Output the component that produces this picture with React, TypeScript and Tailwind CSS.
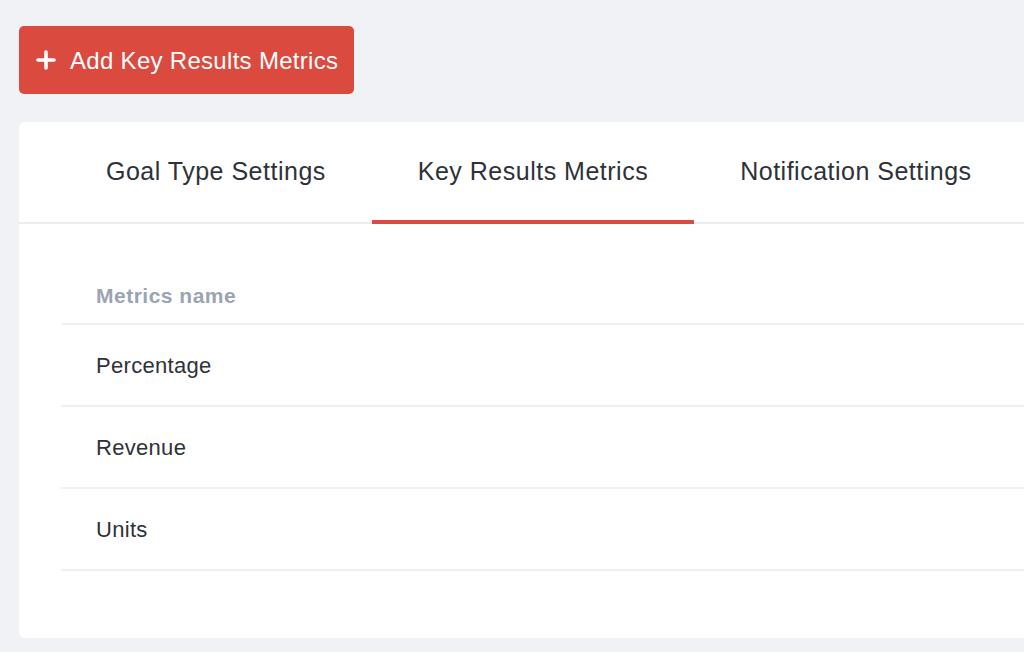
import React from "react";

export default function App() {
  const rows = ["Percentage", "Revenue", "Units"];
  return (
    <div
      className="w-[1024px] h-[652px] overflow-hidden bg-[#f0f2f6]"
      style={{ fontFamily: '"Liberation Sans", Arial, sans-serif' }}
    >
      <div className="pt-[26px] pl-[19px]">
        <button className="flex items-center h-[68px] w-[335px] rounded-[5px] bg-[#da4a3f] text-white pl-[17px]">
          <svg width="20" height="20" viewBox="0 0 20 20" className="mr-[14px]">
            <path d="M10 2v16M2 10h16" stroke="white" strokeWidth="3.6" strokeLinecap="round" />
          </svg>
          <span className="text-[24px] leading-none tracking-[0.3px] pt-[1px]">Add Key Results Metrics</span>
        </button>
      </div>
      <div className="mt-[28px] ml-[19px] w-[1030px] h-[516px] bg-white rounded-[6px]">
        <div className="flex pl-[41px] border-b-2 border-[#e9ecf0] h-[102px]">
          {["Goal Type Settings", "Key Results Metrics", "Notification Settings"].map((t, i) => (
            <div
              key={t}
              className={
                "flex items-center px-[46px] text-[25px] tracking-[0.5px] text-[#2e3238] border-b-4 -mb-[2px] pt-[1px] " +
                (i === 1 ? "border-[#da4a3f]" : "border-transparent")
              }
            >
              {t}
            </div>
          ))}
        </div>
        <div className="pl-[42px] pt-[56px]">
          <div className="h-[45px] border-b-2 border-[#eef0f3] pl-[35px] text-[21px] tracking-[0.5px] text-[#9aa4b3] font-bold">
            Metrics name
          </div>
          {rows.map((r) => (
            <div
              key={r}
              className="h-[82px] flex items-center border-b-2 border-[#eef0f3] pl-[35px] text-[22px] tracking-[0.3px] text-[#2e3238]"
            >
              {r}
            </div>
          ))}
        </div>
      </div>
    </div>
  );
}
